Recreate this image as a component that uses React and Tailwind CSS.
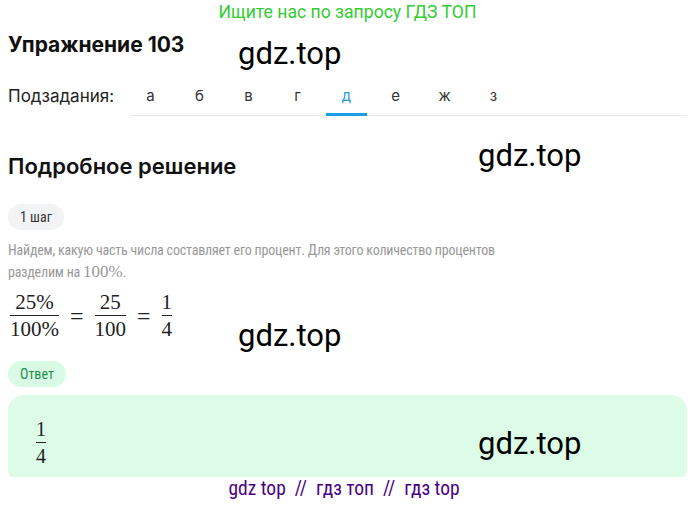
import React from "react";

const tabs = ["а", "б", "в", "г", "д", "е", "ж", "з"];

const narrow = { fontFamily: "'Liberation Sans Narrow', 'Roboto Condensed', Roboto, sans-serif" };
const serif = { fontFamily: "'Liberation Serif', serif" };

const Frac = ({ top, bottom }) => (
  <span className="inline-flex flex-col items-center px-[2px]">
    <span className="leading-[20px] pb-[3px]">{top}</span>
    <span className="leading-[20px] border-t border-[#222] pt-[3px] self-stretch text-center">{bottom}</span>
  </span>
);

const Mark = ({ className }) => (
  <span
    className={`absolute text-[31px] leading-none text-black pointer-events-none ${className}`}
    style={{ fontFamily: "Roboto, 'Liberation Sans', sans-serif" }}
  >
    gdz.top
  </span>
);

export default function App() {
  return (
    <div
      className="relative w-[695px] h-[505px] bg-white overflow-hidden px-2"
      style={{ fontFamily: "Inter, 'Liberation Sans', sans-serif" }}
    >
      {/* top banner */}
      <div
        className="h-[24px] text-center text-[17.6px] leading-[24px] text-[#33cc33]"
        style={{ fontFamily: "Roboto, 'Liberation Sans', sans-serif" }}
      >
        Ищите нас по запросу ГДЗ ТОП
      </div>

      <h1 className="mt-[7px] text-[21px] leading-[28px] font-bold text-[#111]">Упражнение 103</h1>

      {/* sub tasks */}
      <div className="mt-[18px] flex items-end">
        <div className="w-[122px] h-[38px] flex items-center text-[17px] text-[#222]">Подзадания:</div>
        <div className="flex-1 flex gap-[8px] border-b border-[#e5e7eb]">
          {tabs.map((t) => (
            <div
              key={t}
              className={`relative w-[41px] h-[38px] flex items-center justify-center text-[15px] ${
                t === "д" ? "text-[#2d9cdb]" : "text-[#333]"
              }`}
            >
              {t}
              {t === "д" && <span className="absolute left-0 right-0 bottom-[-1px] h-[3px] bg-[#1a9fe0]" />}
            </div>
          ))}
        </div>
      </div>

      <h2 className="mt-[36px] text-[22px] leading-[28px] font-semibold text-[#111]">Подробное решение</h2>

      <div
        className="mt-[24px] inline-flex items-center h-[26px] px-[12px] rounded-full bg-[#f2f3f5] text-[14px] text-[#333]"
        style={narrow}
      >
        1 шаг
      </div>

      <p className="mt-[10px] text-[14px] leading-[21px] tracking-[-0.2px] text-[#999]" style={narrow}>
        Найдем, какую часть числа составляет его процент. Для этого количество процентов
        <br />
        разделим на{" "}
        <span style={serif} className="text-[17px] tracking-normal">
          100%
        </span>
        .
      </p>

      <div className="mt-[9px] flex items-center text-[21px] text-[#222]" style={serif}>
        <Frac top="25%" bottom="100%" />
        <span className="mx-[9px] text-[24px] leading-none">=</span>
        <Frac top="25" bottom="100" />
        <span className="mx-[9px] text-[24px] leading-none">=</span>
        <Frac top="1" bottom="4" />
      </div>

      <div
        className="mt-[22px] inline-flex items-center h-[26px] px-[12px] rounded-full bg-[#d9fbe6] text-[14px] text-[#1f8f4e]"
        style={narrow}
      >
        Ответ
      </div>

      <div className="mt-[8px] h-[82px] rounded-t-2xl rounded-b-[6px] bg-[#dcfce7] pl-[26px] pt-[19px]">
        <div className="text-[20px] text-[#222]" style={serif}>
          <Frac top="1" bottom="4" />
        </div>
      </div>

      <div className="pr-[7px] text-center text-[19.5px] leading-[24px] text-[#4b0082]" style={narrow}>
        gdz top&nbsp;&nbsp;//&nbsp;&nbsp;гдз топ&nbsp;&nbsp;//&nbsp;&nbsp;гдз top
      </div>

      <Mark className="left-[238px] top-[38px]" />
      <Mark className="left-[478px] top-[140px]" />
      <Mark className="left-[238px] top-[320px]" />
      <Mark className="left-[478px] top-[428px]" />
    </div>
  );
}
